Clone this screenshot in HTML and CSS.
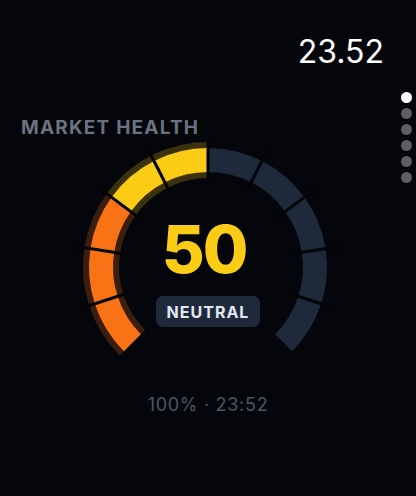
FILE: index.html
```html
<!DOCTYPE html>
<html>
<head>
<meta charset="utf-8">
<link rel="stylesheet" href="styles.css">
</head>
<body>
<div class="screen">
  <div class="header"><span class="clock">23.52</span></div>
  <div class="pager">
    <span class="dot active"></span>
    <span class="dot"></span>
    <span class="dot"></span>
    <span class="dot"></span>
    <span class="dot"></span>
    <span class="dot"></span>
  </div>
  <div class="label">MARKET HEALTH</div>
  <div class="gauge">
    <svg class="gauge-svg" width="264" height="220" viewBox="0 0 264 220">
      <g fill="none" stroke-width="36" stroke-linecap="butt">
        <path class="glow-orange" d="M56.34 202.66 A107 107 0 0 1 30.23 160.06"/>
        <path class="glow-orange" d="M30.23 160.06 A107 107 0 0 1 26.32 110.26"/>
        <path class="glow-orange" d="M26.32 110.26 A107 107 0 0 1 45.44 64.11"/>
        <path class="glow-yellow" d="M45.44 64.11 A107 107 0 0 1 83.42 31.66"/>
        <path class="glow-yellow" d="M83.42 31.66 A107 107 0 0 1 132 20"/>
      </g>
      <g fill="none" stroke-width="24" stroke-linecap="butt">
        <path class="seg-orange" d="M56.34 202.66 A107 107 0 0 1 30.23 160.06"/>
        <path class="seg-orange" d="M30.23 160.06 A107 107 0 0 1 26.32 110.26"/>
        <path class="seg-orange" d="M26.32 110.26 A107 107 0 0 1 45.44 64.11"/>
        <path class="seg-yellow" d="M45.44 64.11 A107 107 0 0 1 83.42 31.66"/>
        <path class="seg-yellow" d="M83.42 31.66 A107 107 0 0 1 132 20"/>
        <path class="seg-off" d="M132 20 A107 107 0 0 1 180.58 31.66"/>
        <path class="seg-off" d="M180.58 31.66 A107 107 0 0 1 218.56 64.11"/>
        <path class="seg-off" d="M218.56 64.11 A107 107 0 0 1 237.68 110.26"/>
        <path class="seg-off" d="M237.68 110.26 A107 107 0 0 1 233.77 160.06"/>
        <path class="seg-off" d="M233.77 160.06 A107 107 0 0 1 207.66 202.66"/>
      </g>
      <g class="sep" stroke-width="3">
        <line x1="51.17" y1="153.27" x2="7.41" y2="167.48"/>
        <line x1="47.05" y1="113.70" x2="2.61" y2="106.66"/>
        <line x1="62.04" y1="77.02" x2="26.03" y2="50.11"/>
        <line x1="93.41" y1="51.27" x2="72.54" y2="10.25"/>
        <line x1="132" y1="42" x2="132" y2="0"/>
        <line x1="170.59" y1="51.27" x2="191.46" y2="10.25"/>
        <line x1="201.96" y1="77.02" x2="237.97" y2="50.11"/>
        <line x1="216.95" y1="113.70" x2="261.39" y2="106.66"/>
        <line x1="212.83" y1="153.27" x2="256.59" y2="167.48"/>
      </g>
    </svg>
    <div class="readout">
      <div class="value">50</div>
      <div class="badge">NEUTRAL</div>
    </div>
  </div>
  <div class="footer">100% · 23:52</div>
</div>
</body>
</html>
```

FILE: styles.css
```css
html, body {
  margin: 0;
  padding: 0;
  background: #05060b;
}

.screen {
  position: relative;
  width: 416px;
  height: 496px;
  overflow: hidden;
  background: #05060b;
  font-family: Inter, "Noto Sans", sans-serif;
  display: flex;
  flex-direction: column;
}

.header {
  padding: 36px 32px 0 0;
  display: flex;
  justify-content: flex-end;
}

.clock {
  color: #ffffff;
  font-size: 32px;
  line-height: 32px;
  font-weight: 400;
}

.pager {
  position: absolute;
  right: 4px;
  top: 92px;
  display: flex;
  flex-direction: column;
  gap: 5px;
}

.dot {
  width: 11px;
  height: 11px;
  border-radius: 50%;
  background: #5c5e63;
}

.dot.active {
  background: #ffffff;
}

.label {
  margin: 50px 0 0 21px;
  color: #6b7280;
  font-size: 19px;
  line-height: 19px;
  font-weight: 700;
  letter-spacing: 1.2px;
}

.gauge {
  position: relative;
  width: 264px;
  height: 220px;
  margin: 3px auto 0;
}

.gauge-svg {
  display: block;
}

.glow-orange { stroke: #3b1e0d; }
.glow-yellow { stroke: #3b320d; }
.seg-orange { stroke: #f97316; }
.seg-yellow { stroke: #facc15; }
.seg-off { stroke: #1e293b; }
.sep { stroke: #030407; }

.readout {
  position: absolute;
  top: 76px;
  left: 0;
  right: 0;
  display: flex;
  flex-direction: column;
  align-items: center;
}

.value {
  color: #facc15;
  font-size: 66px;
  line-height: 66px;
  font-weight: 800;
  letter-spacing: -2px;
  margin-right: 8px;
}

.badge {
  margin-top: 14px;
  height: 31px;
  padding: 0 11px;
  border-radius: 7px;
  background: #1e293b;
  color: #e2e8f0;
  font-size: 16px;
  font-weight: 700;
  letter-spacing: 1px;
  display: flex;
  align-items: center;
}

.footer {
  margin-top: 36px;
  text-align: center;
  color: #4b5563;
  font-size: 18px;
  line-height: 18px;
  letter-spacing: 0.7px;
}
```
